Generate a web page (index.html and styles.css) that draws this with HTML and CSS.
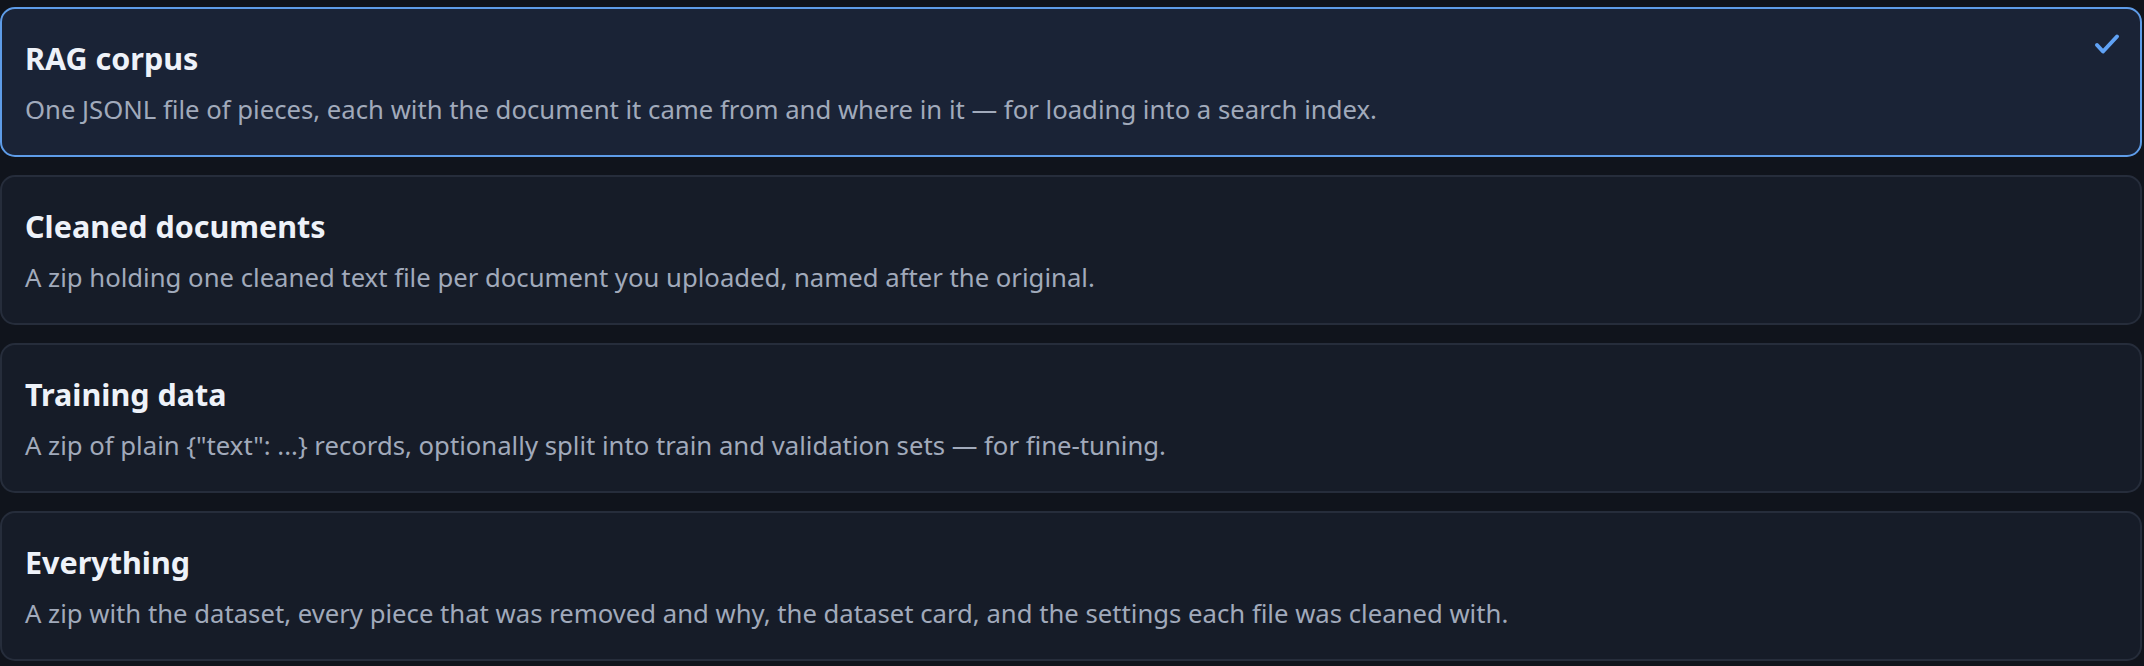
FILE: index.html
```html
<!DOCTYPE html>
<html lang="en">
<head>
<meta charset="utf-8">
<title>Export formats</title>
<link rel="stylesheet" href="styles.css">
</head>
<body>
<div class="options">
  <div class="option selected">
    <div class="option-title">RAG corpus</div>
    <div class="option-desc">One JSONL file of pieces, each with the document it came from and where in it — for loading into a search index.</div>
    <svg class="check" width="28" height="24" viewBox="0 0 28 24" aria-hidden="true"><path d="M4 13 L10 19.5 L24 4.5" fill="none" stroke="#60a2f5" stroke-width="4" stroke-linecap="round" stroke-linejoin="round"/></svg>
  </div>
  <div class="option">
    <div class="option-title">Cleaned documents</div>
    <div class="option-desc">A zip holding one cleaned text file per document you uploaded, named after the original.</div>
  </div>
  <div class="option">
    <div class="option-title">Training data</div>
    <div class="option-desc">A zip of plain {"text": ...} records, optionally split into train and validation sets — for fine-tuning.</div>
  </div>
  <div class="option">
    <div class="option-title">Everything</div>
    <div class="option-desc">A zip with the dataset, every piece that was removed and why, the dataset card, and the settings each file was cleaned with.</div>
  </div>
</div>
</body>
</html>
```
FILE: styles.css
```css
html, body {
  margin: 0;
  padding: 0;
  background: #10141c;
}
body {
  font-family: "Noto Sans", "Open Sans", sans-serif;
}
.options {
  display: flex;
  flex-direction: column;
  gap: 18px;
  padding: 7px 2px 0 0;
}
.option {
  position: relative;
  box-sizing: border-box;
  height: 150px;
  padding: 29px 24px 27px 23px;
  border: 2px solid #262d3b;
  border-radius: 15px;
  background: #161c28;
}
.option.selected {
  border-color: #5e9ce8;
  background: #1a2336;
}
.option-title {
  font-size: 30.5px;
  line-height: 40px;
  font-weight: 700;
  color: #eef2f9;
}
.option-desc {
  margin-top: 14px;
  font-size: 25.7px;
  line-height: 36px;
  color: #a1aabb;
}
.check {
  position: absolute;
  top: 23px;
  right: 19px;
}
```
